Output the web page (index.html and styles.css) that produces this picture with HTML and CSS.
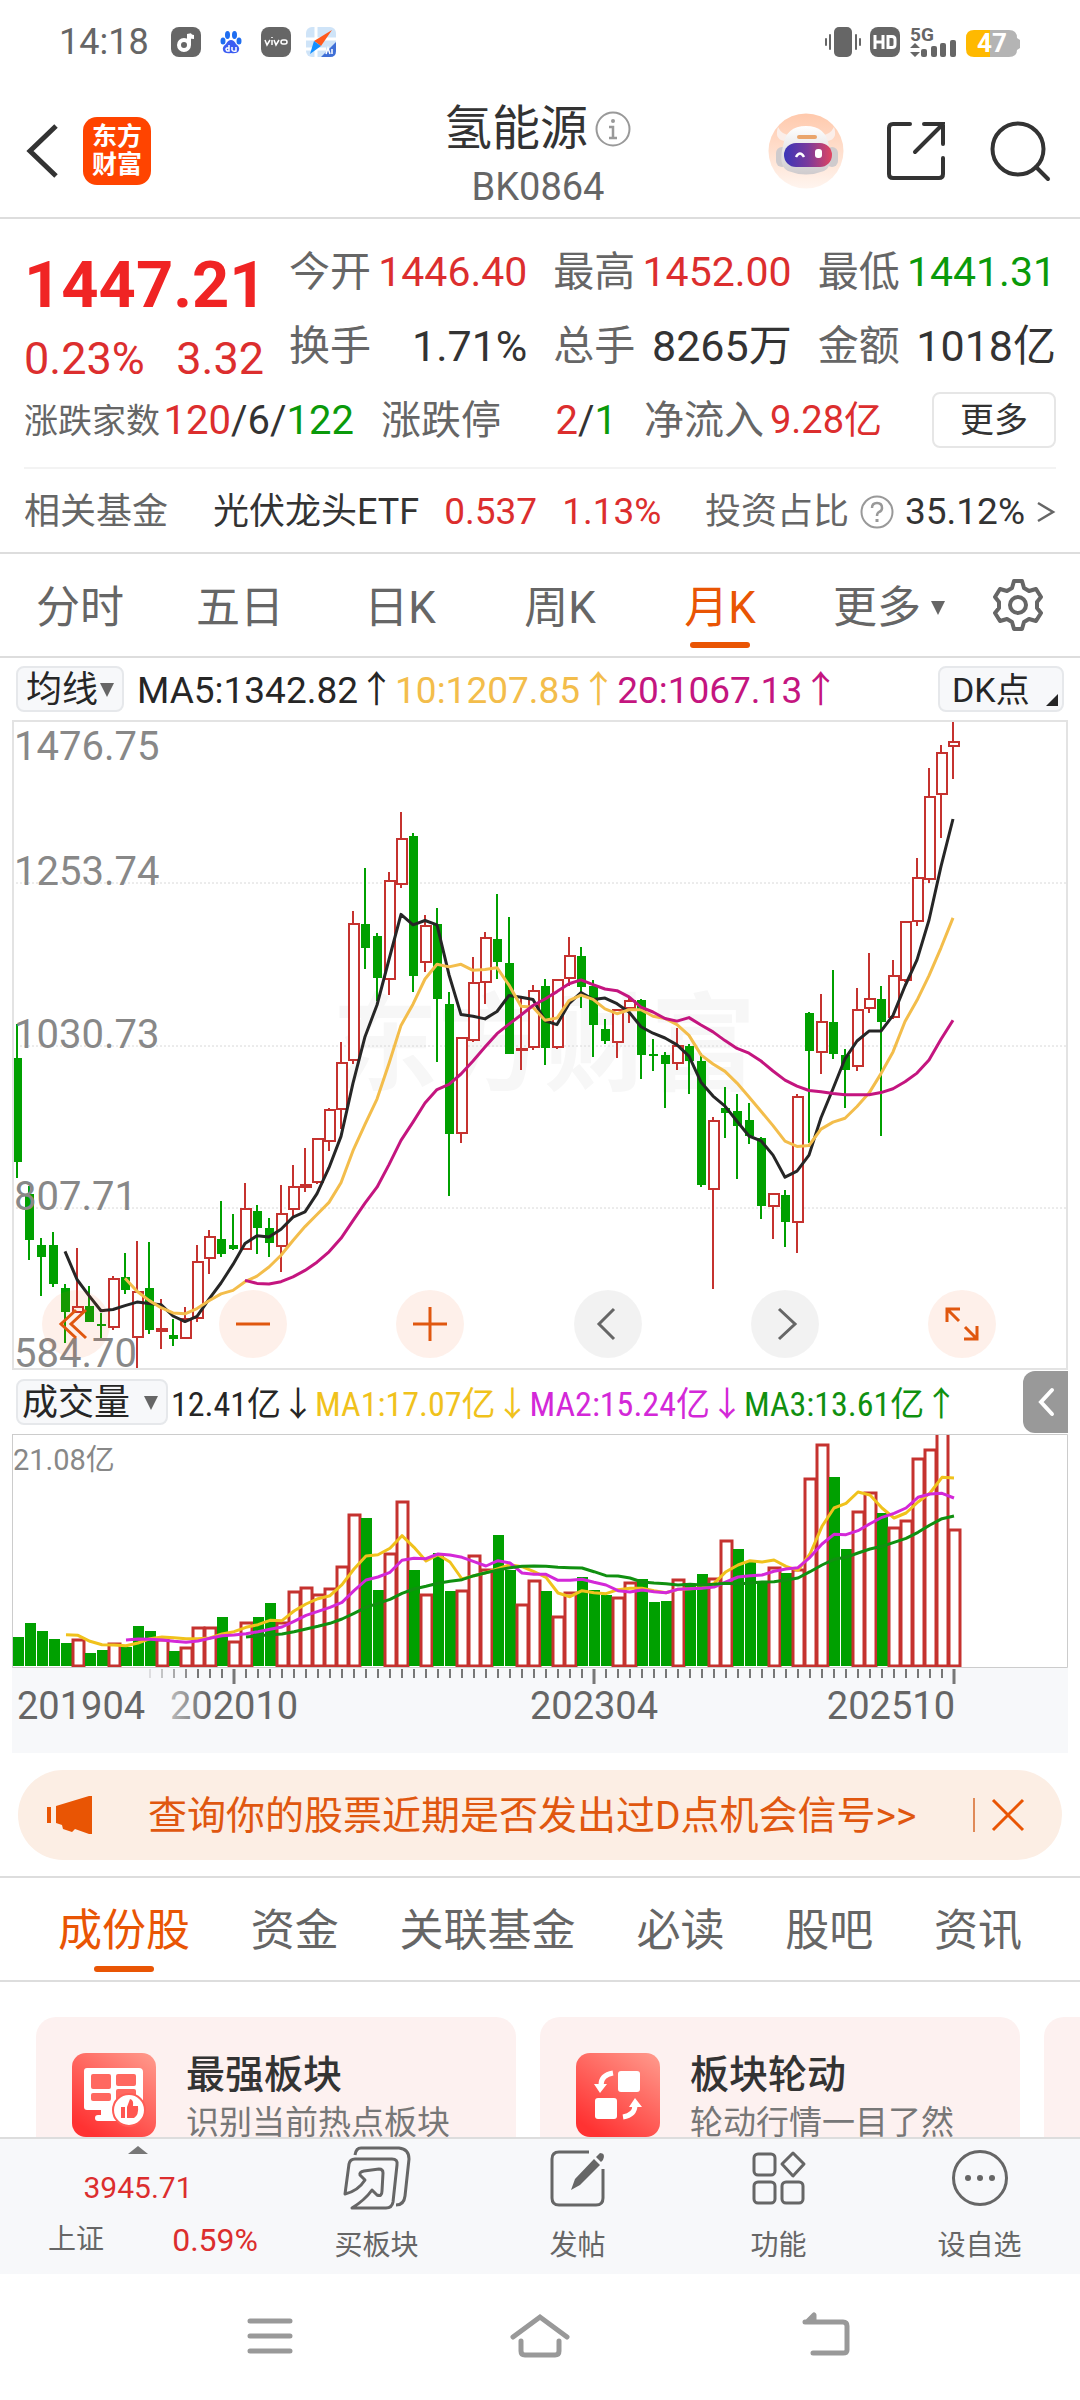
FILE: index.html
```html
<!DOCTYPE html>
<html lang="zh-CN">
<head>
<meta charset="utf-8">
<meta name="viewport" content="width=device-width, initial-scale=1">
<title>氢能源 BK0864</title>
<link rel="stylesheet" href="styles.css">
</head>
<body>
<div class="app">
  <div class="status">
    <span class="clock">14:18</span>
    <svg class="status-icon" width="30" height="30" viewBox="0 0 30 30"><rect width="30" height="30" rx="8" fill="#666"/><circle cx="13" cy="18" r="5" fill="none" stroke="#fff" stroke-width="4"/><path d="M18 18V7q1 3 5 3" fill="none" stroke="#fff" stroke-width="4"/></svg>
    <svg class="status-icon" width="30" height="30" viewBox="0 0 30 30"><g fill="#1f6df0"><ellipse cx="11.500" cy="8" rx="2.500" ry="4"/><ellipse cx="18.500" cy="8" rx="2.500" ry="4"/><ellipse cx="7" cy="14" rx="2.500" ry="3.500"/><ellipse cx="23" cy="14" rx="2.500" ry="3.500"/></g><path d="M15 13q3 0 5 4 4 3 3 6-1 4-8 3-7 1-8-3-1-3 3-6 2-4 5-4Z" fill="#3c5df2"/><path d="M13 18v6h-2q-2-2 0-3h2M16 20v3q1 2 4 1v-4" fill="none" stroke="#fff" stroke-width="1.500"/></svg>
    <svg class="status-icon" width="30" height="30" viewBox="0 0 30 30"><rect width="30" height="30" rx="8" fill="#666"/><path d="m4 13 2 5 3-5M11 13v5M13 13l2 5 3-5M11 10v1" fill="none" stroke="#fff" stroke-width="1.500"/><rect x="20" y="13" width="6" height="4" rx="2" fill="none" stroke="#fff" stroke-width="1.500"/></svg>
    <svg class="status-icon" width="30" height="30" viewBox="0 0 30 30"><rect width="30" height="30" rx="6" fill="#cfe4f8"/><path d="M0 12h30M10 0v30M0 22h20" stroke="#fff" stroke-width="3"/><path d="M30 15v9q0 6-6 6h-9Z" fill="#3f6fd6"/><path d="M26 3 8 14l7 5Z" fill="#ff5a1e"/><path d="M4 27 8 14l7 5Z" fill="#1490ff"/><path d="m20 27 2-6 2 6m2-5v5" fill="none" stroke="#fff" stroke-width="1.500"/></svg>
    <svg class="status-right" width="196" height="30" viewBox="0 0 196 30">
      <g fill="#666"><rect x="9" width="18" height="30" rx="5"/><rect x="4" y="7" width="2" height="16" rx="1"/><rect y="11" width="2" height="8" rx="1"/><rect x="30" y="7" width="2" height="16" rx="1"/><rect x="34" y="11" width="2" height="8" rx="1"/><rect x="45" width="30" height="30" rx="8"/></g>
      <path d="M50 8v14M58 8v14M50 15h8M63 9.500h4q3 0 3 3v5q0 3-3 3h-4Z" fill="none" stroke="#fff" stroke-width="3"/>
      <text x="85" y="14" class="net">5G</text>
      <g fill="#666"><path d="m90 16 5 5H85ZM90 30l5-5H85Z"/><rect x="96" y="22" width="6" height="8" rx="2"/><rect x="106" y="19" width="6" height="11" rx="2"/><rect x="115" y="16" width="6" height="14" rx="2"/><rect x="125" y="13" width="6" height="17" rx="2"/></g>
      <path d="M165 3h19q8 0 8 8l3 2v8l-3 2q0 7-8 7h-19Z" fill="#b4b4b4"/><path d="M165 3v27h-16q-8 0-8-8V11q0-8 8-8Z" fill="#ffb900"/>
      <text x="167" y="25" class="battery" text-anchor="middle">47</text>
    </svg>
  </div>

  <header class="header">
    <div class="header-left">
      <button class="plain" aria-label="返回"><svg width="34" height="56" viewBox="0 0 34 56"><path d="M30 3 4 28l26 25" fill="none" stroke="#333" stroke-width="5"/></svg></button>
      <span class="logo"><b>东方</b><b>财富</b></span>
    </div>
    <div class="title">
      <h1>氢能源<svg width="38" height="38" viewBox="0 0 38 38"><circle cx="19" cy="19" r="16.500" fill="none" stroke="#999" stroke-width="2"/><circle cx="19" cy="11" r="2" fill="#999"/><path d="M15 17h4v11M15 28h8" fill="none" stroke="#999" stroke-width="2.500"/></svg></h1>
      <p>BK0864</p>
    </div>
    <div class="header-right">
      <button class="plain" aria-label="智能助手"><svg width="76" height="76" viewBox="0 0 76 76">
        <defs><linearGradient id="halo" x2="0" y2="1"><stop stop-color="#ffc9ac"/><stop offset="1" stop-color="#fff5ef"/></linearGradient><linearGradient id="visor"><stop stop-color="#3a35b8"/><stop offset=".5" stop-color="#7a3a9c"/><stop offset="1" stop-color="#e04560"/></linearGradient><linearGradient id="shell" x2="0" y2="1"><stop stop-color="#fff"/><stop offset="1" stop-color="#cfcbcd"/></linearGradient></defs>
        <circle cx="38" cy="38" r="37.500" fill="url(#halo)"/><path d="M10 14q-4 12 6 14l6-6q-8 0-12-8ZM66 14q4 12-6 14l-6-6q8 0 12-8Z" fill="#fbeee9"/><rect x="8" y="34" width="12" height="20" rx="6" fill="#cfcbcd"/><rect x="58" y="34" width="12" height="20" rx="6" fill="#cfcbcd"/>
        <path d="M38 13q20 0 23 20 5 20-5 25-18 7-36 0-10-5-5-25 3-20 23-20Z" fill="url(#shell)"/><rect x="29" y="22" width="20" height="4" rx="2" fill="#eaa56c"/><rect x="16" y="30" width="48" height="24" rx="12" fill="url(#visor)"/><path d="M28 44q4-7 8 0" fill="none" stroke="#fff" stroke-width="2.500"/><rect x="47" y="36" width="7" height="9" rx="3" fill="#fff"/></svg></button>
      <button class="plain" aria-label="分享"><svg width="60" height="60" viewBox="0 0 60 60" fill="none" stroke="#333" stroke-width="4" stroke-linecap="round"><path d="M23 3H6q-4 0-4 4v46q0 4 4 4h46q4 0 4-4V37M37 3h19v20M56 3 28 31"/></svg></button>
      <button class="plain" aria-label="搜索"><svg width="60" height="60" viewBox="0 0 60 60" fill="none" stroke="#333" stroke-width="4" stroke-linecap="round"><circle cx="28" cy="28" r="25.500"/><path d="m46 46 12 12"/></svg></button>
    </div>
  </header>

  <main class="main">
    <section class="quote">
      <div class="quote-top">
        <div class="price"><strong>1447.21</strong><p><span>0.23%</span><span>3.32</span></p></div>
        <dl class="stats">
          <div><dt>今开</dt><dd class="up">1446.40</dd></div>
          <div><dt>最高</dt><dd class="up">1452.00</dd></div>
          <div><dt>最低</dt><dd class="down">1441.31</dd></div>
          <div><dt>换手</dt><dd class="big">1.71%</dd></div>
          <div><dt>总手</dt><dd class="big">8265万</dd></div>
          <div><dt>金额</dt><dd class="big">1018亿</dd></div>
        </dl>
      </div>
      <div class="breadth">
        <div class="breadth-item"><span class="small-label">涨跌家数</span><span><span class="up">120</span>/6/<span class="down">122</span></span></div>
        <div class="breadth-item"><span class="label">涨跌停</span><span><span class="up">2</span>/<span class="down">1</span></span></div>
        <div class="breadth-item"><span class="label">净流入</span><span class="up flow">9.28亿</span></div>
        <button class="more">更多</button>
      </div>
      <div class="fund">
        <span class="label">相关基金</span><span class="fund-name">光伏龙头ETF</span><span class="up">0.537</span><span class="up">1.13%</span>
        <span class="ratio"><span class="label">投资占比</span><svg width="34" height="34" viewBox="0 0 34 34" fill="none" stroke="#999" stroke-width="2"><circle cx="17" cy="17" r="15.500"/><path d="M12 13q0-5 5-5t5 5q0 3-3 4-2 1-2 4" stroke-width="2.500"/><path d="M17 24v3" stroke-width="3"/></svg><span class="ratio-value">35.12%</span><svg width="20" height="22" viewBox="0 0 20 22"><path d="m2 2 15 9-15 9" fill="none" stroke="#666" stroke-width="2.500"/></svg></span>
      </div>
    </section>

    <nav class="periods">
      <button>分时</button><button>五日</button><button>日K</button><button>周K</button><button class="active">月K</button><button class="drop">更多<i class="tri"></i></button>
      <button class="gear" aria-label="设置"><svg width="54" height="54" viewBox="0 0 54 54" fill="none" stroke="#666" stroke-width="4" stroke-linejoin="round"><path d="M23 3h8l2 7 5 3 7-2 5 8-4 5v6l4 5-5 8-7-2-5 3-2 7h-8l-2-7-5-3-7 2-5-8 4-5v-6l-4-5 5-8 7 2 5-3Z"/><circle cx="27" cy="27" r="8"/></svg></button>
    </nav>

    <section class="charts">
      <div class="indicator">
        <button class="chip">均线<i class="tri"></i></button>
        <span class="ma5">MA5:1342.82↑</span><span class="ma10">10:1207.85↑</span><span class="ma20">20:1067.13↑</span>
        <button class="chip dk">DK点<i class="corner"></i></button>
      </div>
      <div class="kline">
        <svg id="kline" viewBox="0 0 1056 650" role="img" aria-label="月K线图"></svg>
        <div class="tools">
          <button aria-label="历史"><svg viewBox="0 0 68 68"><path d="M34 20 19 34l15 14M44 20 29 34l15 14"/></svg></button>
          <button aria-label="缩小"><svg viewBox="0 0 68 68"><path d="M17 34h34"/></svg></button>
          <button aria-label="放大"><svg viewBox="0 0 68 68"><path d="M17 34h34M34 17v34"/></svg></button>
          <button class="gray" aria-label="左移"><svg viewBox="0 0 68 68"><path d="M40 19 25 34l15 15"/></svg></button>
          <button class="gray" aria-label="右移"><svg viewBox="0 0 68 68"><path d="m28 19 16 15-16 15"/></svg></button>
          <button aria-label="全屏"><svg viewBox="0 0 68 68"><path d="M19 32V19h13M19 19l12 12M49 36v13H36M49 49 37 37"/></svg></button>
        </div>
      </div>
      <div class="indicator volume-row">
        <button class="chip">成交量<i class="tri"></i></button>
        <span>12.41亿↓</span><span class="v1">MA1:17.07亿↓</span><span class="v2">MA2:15.24亿↓</span><span class="v3">MA3:13.61亿↑</span>
        <button class="collapse" aria-label="收起"><svg width="18" height="30" viewBox="0 0 18 30"><path d="M15 3 4 15l11 12" fill="none" stroke="#fff" stroke-width="4" stroke-linecap="round"/></svg></button>
      </div>
      <svg id="volume" viewBox="0 0 1056 319" role="img" aria-label="成交量图"></svg>
    </section>

    <aside class="banner">
      <svg width="48" height="42" viewBox="0 0 48 42" fill="#e95504"><path d="M0 13h4v16H0ZM9 12 42 2h3v38h-3l-14-5-3 3-9-3-1-4-6-2Z"/></svg>
      <a href="#signal">查询你的股票近期是否发出过D点机会信号&gt;&gt;</a>
      <button class="plain" aria-label="关闭"><svg width="34" height="34" viewBox="0 0 34 34"><path d="m2 2 30 30M32 2 2 32" stroke="#e95504" stroke-width="3"/></svg></button>
    </aside>

    <nav class="tabs">
      <button class="active">成份股</button><button>资金</button><button>关联基金</button><button>必读</button><button>股吧</button><button>资讯</button>
    </nav>

    <section class="cards">
      <a class="card" href="#strong">
        <svg width="84" height="84" viewBox="0 0 84 84"><defs><linearGradient id="red" x1="1" y1="0" x2=".3" y2="1"><stop stop-color="#ff9c8e"/><stop offset="1" stop-color="#ff3232"/></linearGradient></defs><rect width="84" height="84" rx="14" fill="url(#red)"/><path d="M15 15h52q4 0 4 4v38H15q-3 0-3-3V18q0-3 3-3Z" fill="#fff"/><g fill="#ff6860"><rect x="19" y="21" width="20" height="15" rx="2"/><rect x="44" y="21" width="20" height="12" rx="2"/><rect x="19" y="40" width="20" height="8" rx="2"/><rect x="44" y="36" width="20" height="12" rx="2"/></g><path d="M29 57h20v11H26q-3 0-3-3t3-3h3Z" fill="#fff"/><circle cx="57" cy="57" r="16" fill="#fff" stroke="#ff5c55" stroke-width="2"/><path d="M49 54h4v11h-4ZM55 54l3-8q4 1 3 7h5q1 9-4 12h-7Z" fill="#ff5650"/></svg>
        <div><h2>最强板块</h2><p>识别当前热点板块</p></div>
      </a>
      <a class="card" href="#rotate">
        <svg width="84" height="84" viewBox="0 0 84 84"><rect width="84" height="84" rx="14" fill="url(#red)"/><g fill="#fff"><rect x="42" y="18" width="22" height="21" rx="3"/><rect x="19" y="45" width="22" height="21" rx="3"/><path d="m18 31 6 9 7-9ZM53 54l6-9 7 9Z"/></g><path d="M25 32q0-10 12-12M59 52q0 10-12 12" fill="none" stroke="#fff" stroke-width="5"/></svg>
        <div><h2>板块轮动</h2><p>轮动行情一目了然</p></div>
      </a>
      <a class="card" href="#next" aria-label="更多板块"></a>
    </section>
  </main>

  <footer class="bottom">
    <button class="index"><i class="tri up-tri"></i><span class="up index-value">3945.71</span><span class="index-row"><span>上证</span><span class="up">0.59%</span></span></button>
    <button><svg width="70" height="64" viewBox="0 0 70 64" fill="none" stroke="#666" stroke-width="3" stroke-linejoin="round"><path d="M13 9q1-7 6-7h38q10 1 10 11l-4 37q-1 9-9 9"/><path d="M3 48 7 18q1-5 6-5h37q6 0 5 6l-4 37q-1 6-7 6H10q13-8 20-18l5 5q5 2 5-4l1-18q0-4-4-4l-15 2q-5 1-4 4l5 5Q16 45 3 48Z"/></svg>买板块</button>
    <button><svg width="58" height="64" viewBox="0 0 58 64"><path d="M40 6H10q-7 0-7 7v39q0 7 7 7h37q7 0 7-7V23" fill="none" stroke="#666" stroke-width="3"/><path d="m22 44 4-11 19-20 6 6-20 20ZM47 11l4-4q6 0 3 7l-2 2Z" fill="#666"/></svg>发帖</button>
    <button><svg width="58" height="64" viewBox="0 0 58 64" fill="none" stroke="#666" stroke-width="3"><rect x="4" y="8" width="21" height="21" rx="4"/><rect x="4" y="36" width="21" height="21" rx="4"/><rect x="32" y="36" width="21" height="21" rx="4"/><path d="m43 7 11 11-11 12-11-12Z" stroke-linejoin="round"/></svg>功能</button>
    <button><svg width="58" height="64" viewBox="0 0 58 64"><circle cx="29" cy="32" r="26.500" fill="none" stroke="#666" stroke-width="3"/><g fill="#666"><circle cx="17" cy="32" r="3"/><circle cx="29" cy="32" r="3"/><circle cx="41" cy="32" r="3"/></g></svg>设自选</button>
  </footer>
  <div class="system" role="toolbar" aria-label="系统导航">
    <button class="plain" aria-label="最近任务"><svg width="60" height="48" viewBox="0 0 60 48"><path d="M12 8h40M12 23h40M12 38h40" stroke="#999" stroke-width="5" stroke-linecap="round"/></svg></button>
    <button class="plain" aria-label="主屏幕"><svg width="60" height="48" viewBox="0 0 60 48"><path d="M3 24 30 4l27 20M11 28v10q0 4 4 4h30q4 0 4-4V28" fill="none" stroke="#999" stroke-width="5" stroke-linecap="round"/></svg></button>
    <button class="plain" aria-label="返回上一页"><svg width="60" height="48" viewBox="0 0 60 48"><path d="M32 2v7h-7ZM23 9h38q4 0 4 4v24q0 3-4 3H31" fill="none" stroke="#999" stroke-width="5" stroke-linecap="round" stroke-linejoin="round"/></svg></button>
  </div>
</div>
<script src="script.js"></script>
</body>
</html>
```
FILE: styles.css
```css
* { box-sizing: border-box; }
body { margin: 0; background: #fff; color: #333; font-family: Roboto, "Noto Sans CJK SC", sans-serif; font-size: 36px; line-height: 1.2; }
h1, h2, p, dl, dd { margin: 0; font-weight: 400; }
button { font: inherit; color: inherit; border: 0; background: none; padding: 0; }
a { color: inherit; text-decoration: none; }
svg { display: block; flex: none; overflow: visible; }
.app { display: flex; flex-direction: column; height: 100vh; overflow: hidden; }
.up { color: #dc2e2e; }
.down { color: #0a9a0a; }
.plain { display: flex; }
.tri { display: block; border: 7px solid transparent; border-top: 14px solid #666; border-bottom: 0; }

.status { flex: none; display: flex; align-items: center; height: 84px; padding: 0 59px; color: #666; }
.clock { width: 112px; padding-top: 2px; font-size: 36px; }
.status-icon { margin-right: 15px; }
.status-right { margin-left: auto; }
.net { font-size: 19px; font-weight: 700; fill: #666; }
.battery { font-size: 26px; font-weight: 700; fill: #fff; }

.header { flex: none; display: grid; grid-template-columns: 1fr auto 1fr; align-items: center; height: 135px; padding: 0 30px 0 26px; border-bottom: 2px solid #ddd; }
.header-left { display: flex; align-items: center; gap: 23px; }
.logo { display: flex; flex-direction: column; align-items: center; justify-content: center; width: 68px; height: 68px; border-radius: 14px; background: #ff4400; color: #fff; font-size: 25px; line-height: 28px; }
.title { padding-top: 12px; text-align: center; }
.title h1 { display: flex; align-items: center; gap: 6px; font-size: 48px; line-height: 60px; }
.title p { font-size: 38px; line-height: 56px; color: #666; }
.header-right { display: flex; align-items: center; justify-content: flex-end; gap: 43px; }

.main { flex: 1; min-height: 0; overflow: hidden; }
.quote { padding: 16px 24px 0; border-bottom: 2px solid #ddd; }
.quote-top { display: grid; grid-template-columns: 240px 1fr; gap: 25px; }
.price strong { display: block; font-size: 65px; line-height: 100px; color: #f02424; }
.price p { display: flex; justify-content: space-between; font-size: 45px; line-height: 48px; color: #dc2e2e; }
.stats { display: grid; grid-template-columns: repeat(3, 1fr); column-gap: 26px; font-size: 41px; line-height: 74px; }
.stats .big { font-size: 43px; }
.stats div, .breadth-item { display: flex; justify-content: space-between; }
dt, .label, .small-label { color: #666; }
.breadth { display: grid; grid-template-columns: 330px 236px 238px 1fr; column-gap: 27px; align-items: center; height: 74px; font-size: 40px; }
.breadth .flow { font-size: 38px; }
.breadth-item { align-items: center; padding-top: 2px; }
.small-label { font-size: 34px; }
.more { justify-self: end; width: 124px; height: 56px; border: 2px solid #e6e6e6; border-radius: 8px; font-size: 34px; line-height: 50px; }
.fund { display: flex; align-items: center; height: 85px; margin-top: 10px; padding-top: 4px; border-top: 2px solid #f3f3f3; }
.fund-name { margin-left: 45px; }
.fund .up { margin-left: 25px; font-size: 37px; }
.ratio { display: flex; align-items: center; gap: 11px; margin-left: auto; }
.ratio-value { font-size: 37px; }

.periods { display: grid; grid-template-columns: repeat(5, 160fr) 178fr 80fr; height: 104px; padding-right: 22px; border-bottom: 2px solid #ddd; color: #666; font-size: 44px; }
.periods button { display: flex; align-items: center; justify-content: center; padding-top: 6px; }
.periods .drop { gap: 10px; }
.periods .gear { padding-top: 0; }
.active { color: #e95504; position: relative; }
.active::after { content: ""; position: absolute; left: calc(50% - 30px); bottom: 8px; width: 60px; height: 6px; border-radius: 3px; background: #e95504; }

.charts { padding: 0 12px; }
.indicator { display: flex; align-items: center; height: 62px; padding: 0 4px; color: #262626; font-size: 37px; }
.indicator span { padding-top: 4px; }
.chip { display: flex; align-items: center; justify-content: space-between; width: 108px; height: 46px; padding: 2px 8px 0; margin-right: 13px; border: 2px solid #e6e8eb; border-radius: 8px; background: #f7f8fa; color: #262626; font-size: 36px; line-height: 40px; }
.dk { width: 126px; margin: 0 0 0 auto; padding: 2px 4px 0 12px; font-size: 34px; }
.corner { align-self: flex-end; margin-bottom: 4px; border-left: 12px solid transparent; border-bottom: 12px solid #262626; }
.ma10 { color: #f3bd4b; }
.ma20 { color: #c4157f; }
.kline { position: relative; }
.kline > svg, #volume { width: 100%; height: auto; overflow: hidden; }
.tools { position: absolute; left: 2.8%; right: 6.8%; bottom: 12px; display: flex; justify-content: space-between; }
.tools button { width: 68px; height: 68px; border-radius: 50%; background: rgba(240, 90, 20, .09); }
.tools svg { fill: none; stroke: #e0570f; stroke-width: 3px; }
.tools .gray { background: rgba(0, 0, 0, .05); }
.tools .gray svg { stroke: #666; }
.volume-row { height: 64px; padding-right: 0; font-family: "Roboto Condensed", "Liberation Sans Narrow", Roboto, "Noto Sans CJK SC", sans-serif; font-size: 34px; }
.volume-row .chip { width: 152px; margin-right: 3px; padding: 2px 8px 0 4px; font-size: 36px; }
.volume-row span { white-space: nowrap; }
.v1 { color: #f0c21c; }
.v2 { color: #d328d8; }
.v3 { color: #109010; }
.collapse { display: flex; align-items: center; justify-content: center; width: 45px; height: 62px; margin-left: auto; border-radius: 12px 0 0 12px; background: #999; }
.axis-price { font-size: 40px; fill: #888; }
.axis-volume { font-size: 29px; fill: #888; }
.axis-date { font-size: 38px; fill: #666; }
.watermark { font-size: 106px; font-weight: 700; fill: #f7f7f7; }

.banner { display: flex; align-items: center; height: 90px; margin: 17px 18px 16px; padding: 0 37px 0 29px; border-radius: 45px; background: #fceee4; color: #e0570f; font-size: 39px; }
.banner a { flex: 1; margin-left: 53px; padding-top: 2px; }
.banner button { padding-left: 16px; border-left: 2px solid #e08a58; }
.tabs { display: flex; justify-content: space-between; height: 106px; padding: 0 58px; border-top: 2px solid #ddd; border-bottom: 2px solid #ddd; color: #666; font-size: 44px; }
.tabs button { padding-top: 4px; }
.cards { display: grid; grid-template-columns: 480px 480px 480px; gap: 24px; margin: 35px 0 0 36px; }
.card { display: flex; gap: 30px; height: 156px; padding: 36px; border-radius: 20px; background: #fdf1f0; }
.card h2 { font-size: 39px; font-weight: 500; line-height: 44px; color: #333; }
.card p { font-size: 33px; line-height: 52px; color: #777; white-space: nowrap; }

.bottom { flex: none; display: grid; grid-template-columns: 276px repeat(4, 1fr); height: 137px; border-top: 2px solid #ddd; background: #f7f8fa; color: #666; font-size: 28px; }
.bottom button { display: flex; flex-direction: column; align-items: center; padding-top: 7px; gap: 16px; line-height: 40px; }
.bottom .index { gap: 16px; }
.up-tri { border: 10px solid transparent; border-bottom: 8px solid #777; border-top: 0; }
.index-value { font-size: 30px; line-height: 36px; }
.index-row { display: flex; justify-content: space-between; width: 210px; margin-left: 30px; line-height: 36px; }
.index-row .up { font-size: 32px; }
.system { flex: none; display: flex; justify-content: space-around; align-items: center; height: 126px; padding: 0 132px; }
```
FILE: script.js
```js
const STEP = 12;
const RED = '#c5322f';
const GREEN = '#00a000';

// Each candle: direction, high, body top, body bottom, low (chart units, downwards).
const candles = `G 744 823 1063 1098|G 1118 1135 1241 1287|G 1238 1254 1280 1370|G 1224 1254 1344 1351|G 1343 1352 1408 1480|R 1261 1397 1411 1411|G 1349 1395 1430 1430|G 1410 1435 1440 1473|R 1325 1331 1445 1449|G 1271 1326 1358 1366|R 1245 1362 1467 1545|G 1247 1352 1449 1459|R 1377 1447 1455 1494|G 1424 1460 1469 1487|R 1397 1424 1469 1469|R 1253 1293 1425 1431|R 1219 1236 1285 1321|G 1151 1240 1275 1280|G 1181 1254 1263 1265|R 1111 1171 1264 1266|G 1161 1175 1215 1273|G 1190 1214 1248 1281|R 1116 1181 1259 1316|R 1070 1120 1173 1186|R 1030 1114 1123 1131|R 1008 1010 1111 1113|R 937 941 1015 1036|R 785 834 941 986|R 482 513 830 835|G 383 513 569 616|G 533 541 637 690|R 394 414 643 676|R 254 316 423 430|G 304 310 633 670|R 492 518 603 623|G 476 512 685 832|G 670 697 998 1140|R 776 776 998 1019|R 590 650 783 785|R 531 546 649 698|G 445 548 600 639|G 497 603 812 813|R 683 801 807 849|R 653 667 800 803|G 639 655 798 839|R 642 643 800 801|R 544 588 641 655|G 566 587 658 706|G 643 657 747 820|G 733 755 783 790|R 709 712 787 822|R 680 690 708 742|G 685 689 816 871|G 779 813 818 853|G 809 815 835 938|R 753 794 836 849|G 789 795 828 905|G 810 828 1116 1120|R 958 967 1126 1355|G 889 937 948 1007|G 904 945 979 1102|G 926 965 1003 1021|G 1005 1007 1164 1194|R 1135 1136 1166 1239|G 1126 1137 1201 1257|R 905 912 1202 1272|G 717 718 806 1018|R 674 738 810 860|G 620 739 814 825|G 802 816 850 938|R 661 711 842 852|R 580 686 708 718|G 655 685 740 1001|R 595 633 730 732|R 507 508 644 646|R 360 408 508 518|R 153 221 411 418|R 101 119 216 314|R 46 94 106 178`
  .split('|').map(row => row.split(' '));

const averages = [
  [4, '#262626', [1268,1333,1370,1405,1402,1393,1385,1388,1391,1417,1430,1418,1378,1341,1298,1250,1232,1235,1217,1189,1177,1135,1075,1003,880,773,700,595,491,515,505,515,630,722,726,732,715,678,682,687,736,745,697,671,687,684,697,716,750,765,776,792,818,878,910,933,968,1002,1013,1046,1097,1083,1046,960,893,824,783,760,760,724,656,596,504,380,271]],
  [9, '#f3bd4b', [1330,1360,1381,1398,1410,1412,1400,1382,1366,1358,1338,1325,1304,1277,1243,1211,1183,1155,1110,1036,975,917,835,747,698,640,606,612,606,620,618,614,654,703,705,735,730,690,677,687,709,720,711,711,726,731,745,770,815,836,853,880,912,945,978,1014,1026,1024,986,970,961,934,903,858,808,738,689,632,568,499]],
  [19, '#c4157f', [1335,1342,1343,1338,1327,1312,1293,1269,1238,1197,1157,1120,1068,1012,970,926,895,883,859,829,797,766,744,723,701,686,669,651,642,653,663,667,681,705,716,731,737,729,746,762,782,800,811,829,852,873,887,897,900,904,907,907,907,902,893,877,857,827,779,735]],
];

const volumes = [830,788,812,835,848,835,876,868,846,858,795,810,836,870,860,800,799,769,842,785,769,726,784,692,678,700,681,617,461,471,688,576,420,627,701,577,691,688,583,625,522,628,731,659,690,767,693,648,687,702,710,664,655,725,721,655,673,639,651,539,564,604,664,618,636,625,352,251,349,566,451,394,458,500,478,291,265,215,506];
// Months whose volume colour differs from the candle's.
const volumeColour = { 10: 'G', 18: 'R', 59: 'R', 66: 'R' };

const volumeAverages = [
  [4, '#f0c21c', [822,824,842,852,853,855,847,834,829,831,834,834,832,820,813,800,792,779,780,751,730,714,705,672,625,586,582,563,525,560,601,582,604,655,645,636,624,612,618,633,650,697,708,690,696,699,687,683,683,690,696,686,684,681,668,633,613,600,604,598,617,629,580,497,442,428,394,403,442,472,457,424,397,350,352]],
  [9, '#d328d8', [838,835,836,838,842,845,841,833,825,823,819,813,806,799,782,764,752,740,725,690,658,649,635,599,593,594,580,583,590,603,616,600,607,637,641,641,659,659,656,665,673,690,694,688,693,696,686,684,683,679,664,649,645,643,632,625,621,590,550,521,522,510,489,470,458,442,410,400,398,412]],
  [19, '#109010', [829,825,822,820,813,805,797,788,775,758,740,728,716,698,685,677,668,662,657,645,636,628,621,617,616,617,620,621,622,633,645,646,652,664,667,669,673,671,673,671,668,670,667,664,663,658,652,633,613,596,590,577,565,557,545,533,515,493,474,466]],
];

const line = (list, x, y) => list.map(([start, colour, values]) =>
  `<polyline fill="none" stroke="${colour}" stroke-width="3" stroke-linejoin="round" points="${values.map((v, i) => `${x(start + i)},${y(v).toFixed(1)}`).join(' ')}"/>`).join('');

function drawKline() {
  const x = i => 5 + i * STEP;
  const y = v => (v - 45) / 2.306 + 1;
  let out = '<text class="watermark" x="320" y="362">东方财富</text>';
  for (const gy of [163, 326, 488]) out += `<path d="M0 ${gy}h1056" stroke="#d8d8d8" stroke-dasharray="2 2"/>`;
  candles.forEach(([dir, ...v], i) => {
    const [high, top, bottom, low] = v.map(n => Math.round(y(+n)));
    const colour = dir === 'R' ? RED : GREEN;
    out += `<path d="M${x(i)} ${high}V${top}M${x(i)} ${bottom}V${low}" stroke="${colour}" stroke-width="2"/>`;
    const height = Math.max(bottom - top, 2);
    out += dir === 'R'
      ? `<rect x="${x(i) - 4}" y="${top}" width="10" height="${Math.max(height - 1, 1)}" fill="#fff" stroke="${colour}" stroke-width="2"/>`
      : `<rect x="${x(i) - 4}" y="${top}" width="9" height="${height}" fill="${colour}"/>`;
  });
  out += line(averages, x, y);
  [['1476.75', 40], ['1253.74', 165], ['1030.73', 328], ['807.71', 490], ['584.70', 647]].forEach(([label, ly]) => {
    out += `<text class="axis-price" x="2" y="${ly}">${label}</text>`;
  });
  out += '<rect x="1" y="1" width="1054" height="648" fill="none" stroke="#e3e3e3" stroke-width="2"/>';
  document.getElementById('kline').innerHTML = out;
}

function drawVolume() {
  const x = i => 6 + i * STEP;
  const y = v => (v - 220) / 3;
  let out = '<rect y="234" width="1056" height="85" fill="#f7f8fa"/>';
  volumes.forEach((v, i) => {
    const top = Math.round(y(v));
    const dir = volumeColour[i] || candles[i][0];
    out += dir === 'R'
      ? `<rect x="${x(i) - 5}" y="${top + 1}" width="11" height="${231 - top}" fill="#fff" stroke="${RED}" stroke-width="3"/>`
      : `<rect x="${x(i) - 5}" y="${top}" width="11" height="${232 - top}" fill="${GREEN}"/>`;
  });
  out += line(volumeAverages, x, y);
  out += '<path d="M0 .5H1055.500V233.500H.5V.5" fill="none" stroke="#ccc"/>';
  out += '<text class="axis-volume" x="1" y="36">21.08亿</text>';
  for (let i = 11; i < 79; i++) {
    const major = i === 18 || i === 48 || i === 78;
    out += `<path d="M${x(i)} 235v${major ? 15 : 9}" stroke="#777" stroke-width="${major ? 3 : 2}" opacity="${Math.min(1, (i - 10) / 5)}"/>`;
  }
  out += '<defs><linearGradient id="fade"><stop stop-color="#bbb"/><stop offset=".3" stop-color="#666"/></linearGradient></defs>';
  out += '<text class="axis-date" x="5" y="285">201904</text>';
  out += '<text class="axis-date" x="158" y="285" style="fill:url(#fade)">202010</text>';
  out += '<text class="axis-date" x="582" y="285" text-anchor="middle">202304</text>';
  out += '<text class="axis-date" x="943" y="285" text-anchor="end">202510</text>';
  document.getElementById('volume').innerHTML = out;
}

drawKline();
drawVolume();
```
